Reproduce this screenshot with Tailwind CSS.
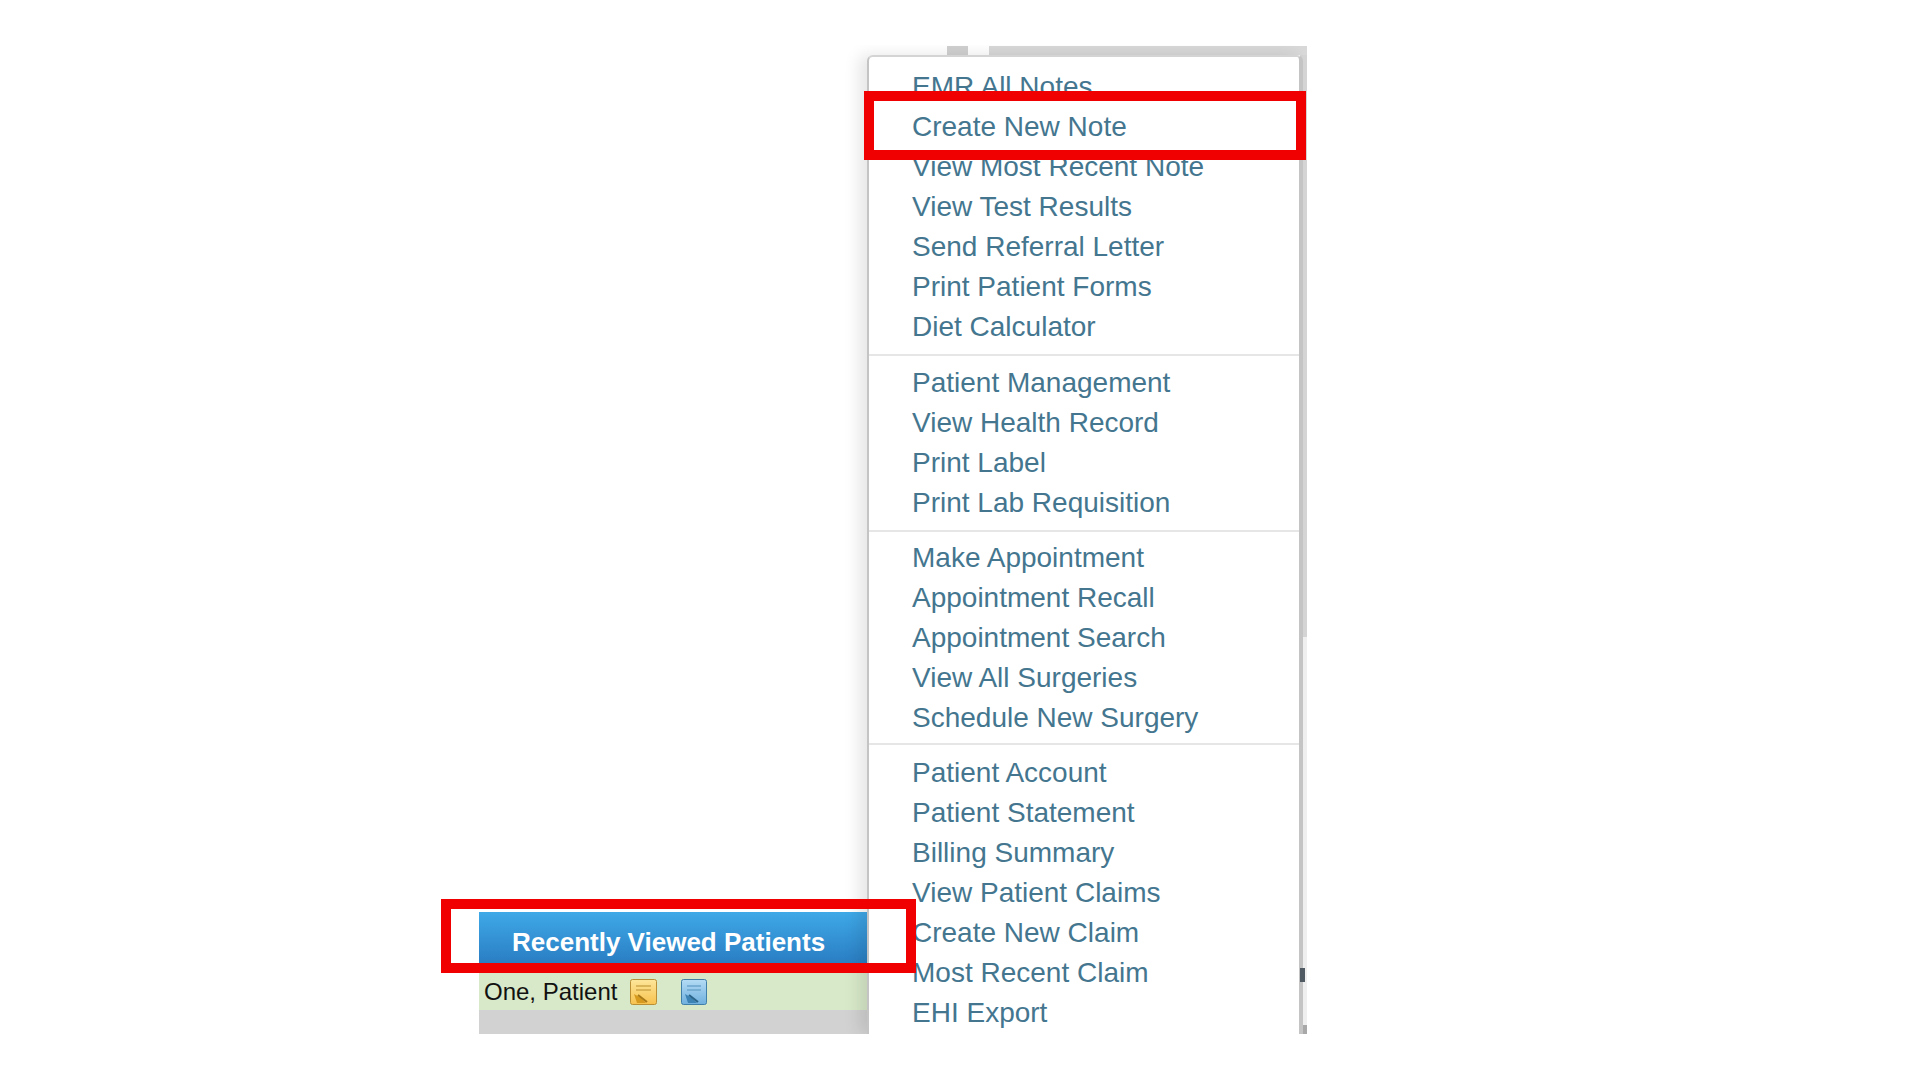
<!DOCTYPE html>
<html lang="en">

<head>
    <meta charset="UTF-8">
    <meta name="viewport" content="width=device-width, initial-scale=1.0">
    <title>Recently Viewed Patients</title>
    <script src="https://cdn.jsdelivr.net/npm/@tailwindcss/browser@4"></script>
</head>

<body class="bg-white">
    <div class="relative w-[1920px] h-[1080px] overflow-hidden font-['Liberation_Sans',Arial,sans-serif]">
        <div class="flex items-stretch h-[1034px] pt-[46px] pl-[479px]">

            <!-- recently viewed panel -->
            <div class="w-[388px] flex flex-col justify-end">
                <div class="h-[52px] flex items-center pl-[33px] pt-[8px] text-white font-bold text-[26px] bg-gradient-to-b from-[#3fa9e8] to-[#2a7dc2]">Recently Viewed Patients</div>
                <div class="h-[46px] bg-[#d8e9c9] flex items-center pl-[5px] pt-[10px] text-[24px] text-[#111]">
                    <span class="w-[146px]">One, Patient</span>
                    <svg width="27" height="26" viewBox="0 0 27 26">
                        <defs>
                            <linearGradient id="noteYellow" x1="0" y1="0" x2="0" y2="1">
                                <stop offset="0" stop-color="#fde69b" />
                                <stop offset="1" stop-color="#f7c24d" />
                            </linearGradient>
                        </defs>
                        <rect x="0.5" y="0.5" width="26" height="25" rx="2" fill="url(#noteYellow)" stroke="#b98f35" />
                        <path d="M6 7h15M6 11h15" stroke="#cfa84a" stroke-width="1.5" />
                        <path d="M4 15l7 4 5 5H7z" fill="#d69a1f" />
                        <path d="M8 16l9 7" stroke="#a87a18" stroke-width="2" />
                    </svg>
                    <svg class="ml-[24px]" width="26" height="26" viewBox="0 0 26 26">
                        <defs>
                            <linearGradient id="noteBlue" x1="0" y1="0" x2="0" y2="1">
                                <stop offset="0" stop-color="#b4dbf4" />
                                <stop offset="1" stop-color="#6fb0de" />
                            </linearGradient>
                        </defs>
                        <rect x="0.5" y="0.5" width="25" height="25" rx="2" fill="url(#noteBlue)" stroke="#3f7fa8" />
                        <path d="M6 7h14M6 11h14" stroke="#6ca5cc" stroke-width="1.5" />
                        <path d="M4 15l7 4 5 5H7z" fill="#3d84b5" />
                        <path d="M8 16l9 7" stroke="#2b6488" stroke-width="2" />
                    </svg>
                </div>
                <div class="h-[24px] bg-[#d2d2d2]"></div>
            </div>

            <!-- menu with the page behind it -->
            <div class="relative w-[440px] pt-[9px]">
                <div class="absolute top-0 left-[80px] w-[21px] h-[9px] bg-[#d0d0d0]"></div>
                <div class="absolute top-0 left-[122px] w-[318px] h-[9px] bg-[#d8d8d8]"></div>
                <div class="absolute top-[9px] bottom-0 right-0 w-[7px] bg-[#efefef]">
                    <div class="h-[582px] bg-[#d4d4d4]"></div>
                    <div class="absolute bottom-0 left-0 w-[7px] h-[9px] bg-[#a8a8a8]"></div>
                </div>

                <div class="relative w-[436px] h-full [clip-path:inset(-10px_0_0_-40px)] bg-white border-l-2 border-r-4 border-t-2 border-[#c4c4c4] border-t-[#d4d4d4] rounded-t-[6px] shadow-[-8px_0_16px_rgba(0,0,0,0.10)] text-[28px] leading-[40px] text-[#44768f] pt-[10px]">
                    <ul class="pl-[43px] pb-[7px] border-b-2 border-[#e6e6e6]">
                        <li>EMR All Notes</li>
                        <li>Create New Note</li>
                        <li>View Most Recent Note</li>
                        <li>View Test Results</li>
                        <li>Send Referral Letter</li>
                        <li>Print Patient Forms</li>
                        <li>Diet Calculator</li>
                    </ul>
                    <ul class="pl-[43px] pt-[7px] pb-[7px] border-b-2 border-[#e6e6e6]">
                        <li>Patient Management</li>
                        <li>View Health Record</li>
                        <li>Print Label</li>
                        <li>Print Lab Requisition</li>
                    </ul>
                    <ul class="pl-[43px] pt-[6px] pb-[5px] border-b-2 border-[#e6e6e6]">
                        <li>Make Appointment</li>
                        <li>Appointment Recall</li>
                        <li>Appointment Search</li>
                        <li>View All Surgeries</li>
                        <li>Schedule New Surgery</li>
                    </ul>
                    <ul class="pl-[43px] pt-[8px]">
                        <li>Patient Account</li>
                        <li>Patient Statement</li>
                        <li>Billing Summary</li>
                        <li>View Patient Claims</li>
                        <li>Create New Claim</li>
                        <li>Most Recent Claim</li>
                        <li>EHI Export</li>
                    </ul>
                </div>

                <!-- bit of page text showing past the menu edge -->
                <div class="absolute bottom-[52px] right-[2px] w-[5px] h-[14px] bg-[#4f5a62]"></div>
            </div>
        </div>

        <!-- annotation boxes -->
        <div class="absolute left-[864px] top-[91px] w-[442px] h-[69px] border-[10px] border-[#f00000]"></div>
        <div class="absolute left-[441px] top-[899px] w-[475px] h-[74px] border-[10px] border-[#f00000]"></div>
    </div>
</body>

</html>
